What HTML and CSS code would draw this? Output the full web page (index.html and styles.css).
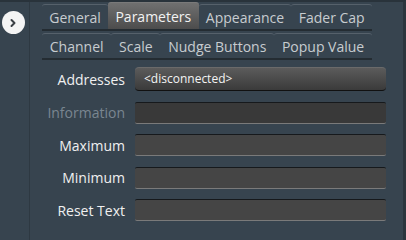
FILE: index.html
```html
<!DOCTYPE html>
<html lang="en">
<head>
  <meta charset="UTF-8" />
  <title>Parameters</title>
  <link rel="stylesheet" href="styles.css">
</head>
<body>
  <div class="window">
    <div class="sidebar">
      <button class="toggle">
        <svg width="10" height="10" viewBox="0 0 10 10"><path d="M3.5 2 L6.5 5 L3.5 8" fill="none" stroke="#3a3f44" stroke-width="2" stroke-linecap="round" stroke-linejoin="round"/></svg>
      </button>
    </div>
    <div class="main">
      <div class="tabs">
        <div class="tab">General</div>
        <div class="tab active">Parameters</div>
        <div class="tab">Appearance</div>
        <div class="tab">Fader Cap</div>
      </div>
      <div class="tabs">
        <div class="tab">Channel</div>
        <div class="tab">Scale</div>
        <div class="tab">Nudge Buttons</div>
        <div class="tab">Popup Value</div>
      </div>

      <div class="form">
        <label>Addresses</label>
        <div class="field picker">&lt;disconnected&gt;</div>
        <label class="muted">Information</label>
        <div class="field disabled"></div>
        <label>Maximum</label>
        <div class="field"></div>
        <label>Minimum</label>
        <div class="field"></div>
        <label>Reset Text</label>
        <div class="field"></div>
      </div>
    </div>
  </div>
</body>
</html>
```

FILE: styles.css
```css
body {
  margin: 0;
  background: #37444f;
  font-family: "Open Sans", "Noto Sans", sans-serif;
}
.window {
  display: flex;
  width: 406px;
  height: 240px;
  box-sizing: border-box;
  border-top: 2px solid #29333b;
  border-right: 3px solid #2b353d;
  background: #37444f;
}
.sidebar {
  width: 29px;
  border-right: 1px solid #2e3942;
  display: flex;
  justify-content: center;
}
.toggle {
  margin-top: 9px;
  margin-left: -3px;
  width: 23px;
  height: 23px;
  border-radius: 50%;
  border: none;
  background: #f4f4f4;
  padding: 0;
  display: flex;
  align-items: center;
  justify-content: center;
}
.main {
  flex: 1;
  padding-left: 12px;
}
.tabs {
  display: flex;
  width: 330px;
  height: 29px;
}
.tab {
  flex: auto;
  text-align: center;
  font-size: 14px;
  line-height: 26px;
  color: #c7ccd0;
  padding: 0 5px;
  border-top: 1px solid #56616b;
  border-bottom: 2px solid #242c32;
  border-radius: 3px 3px 0 0;
  margin-top: 2px;
}
.tab.active {
  color: #f2f2f2;
  margin-top: 0;
  line-height: 28px;
  border-top-color: #7a7a7a;
  background: linear-gradient(#707070, #4c4c4c);
}
.form {
  display: grid;
  grid-template-columns: 95px 251px;
  column-gap: 10px;
  row-gap: 10.5px;
  margin-left: -12px;
  margin-top: 7px;
  align-items: center;
}
.form label {
  text-align: right;
  font-size: 14px;
  color: #f0f0f0;
}
.form label.muted {
  color: #7a8691;
}
.field {
  height: 22px;
  box-sizing: border-box;
  background: #454545;
  border-top: 1px solid #16191c;
  border-bottom: 1px solid #7a7a7a;
  border-radius: 2px;
}
.field.disabled {
  background: #393939;
}
.field.picker {
  height: 24px;
  background: linear-gradient(#5b5b5b, #3a3a3a);
  border-top: 1px solid #6a6a6a;
  border-bottom: 1px solid #111;
  border-radius: 4px;
  color: #f4f4f4;
  font-size: 12px;
  line-height: 21px;
  padding-left: 9px;
}
```
